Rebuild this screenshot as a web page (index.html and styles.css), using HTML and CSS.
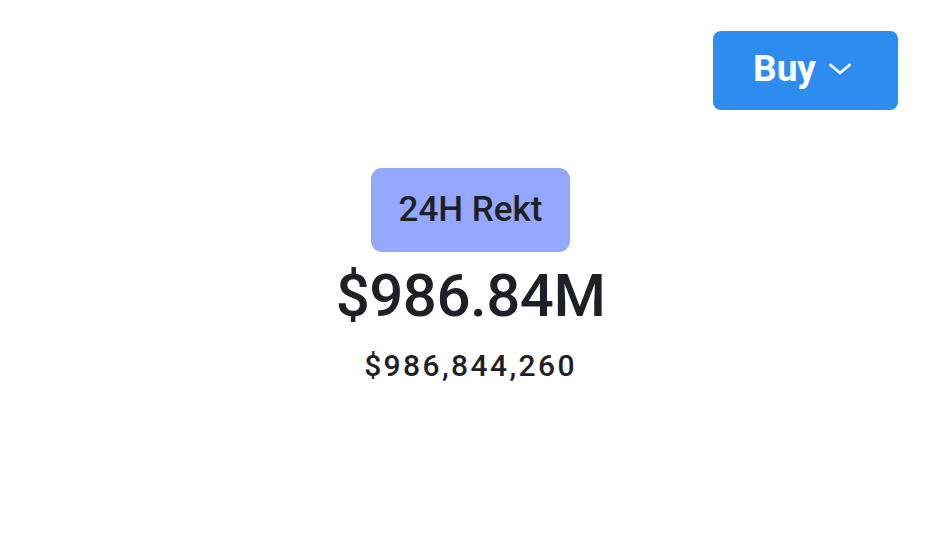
FILE: index.html
```html
<!DOCTYPE html>
<html>
<head>
<meta charset="utf-8">
<link rel="stylesheet" href="styles.css">
</head>
<body>
<header class="topbar">
  <button class="buy-btn">Buy
    <svg class="chev" width="24" height="12" viewBox="0 0 24 12"><path d="M2.5 2 L12 10 L21.5 2" fill="none" stroke="#fff" stroke-width="2.8" stroke-linecap="round" stroke-linejoin="round"/></svg>
  </button>
</header>
<main class="stats">
  <div class="badge">24H Rekt</div>
  <div class="big">$986.84M</div>
  <div class="exact">$986,844,260</div>
</main>
</body>
</html>
```
FILE: styles.css
```css
html, body { margin: 0; padding: 0; background: #fff; }
body { font-family: Roboto, "Liberation Sans", sans-serif; color: #1f2027; }
.topbar { display: flex; justify-content: flex-end; padding: 31px 34px 0 0; }
.buy-btn {
  display: flex; align-items: center; justify-content: center; gap: 12px;
  width: 185px; height: 79px; border: none; border-radius: 8px;
  background: #2d8cf0; color: #fff;
  font-family: Roboto, sans-serif; font-weight: 700; font-size: 37px;
  padding: 0 6px 5px 0;
}
.chev { margin-top: 2px; }
.stats { display: flex; flex-direction: column; align-items: center; padding: 58px 0 0 9px; }
.badge {
  width: 199px; height: 84px; box-sizing: border-box;
  display: flex; align-items: center; justify-content: center;
  background: #94a8ff; border-radius: 11px;
  font-size: 35px; font-weight: 500; color: #1f2027;
  padding-bottom: 2px;
}
.big { font-size: 60px; font-weight: 500; line-height: 1; margin-top: 14px; letter-spacing: -0.5px; }
.exact { font-size: 30px; font-weight: 500; line-height: 1; margin-top: 25px; letter-spacing: 2.4px; }
```
